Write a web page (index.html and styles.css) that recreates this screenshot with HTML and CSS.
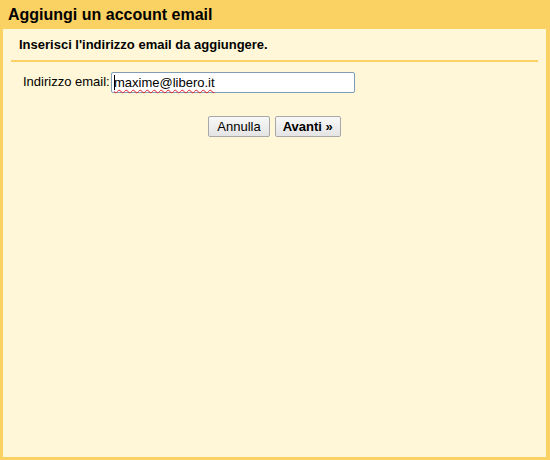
FILE: index.html
```html
<!DOCTYPE html>
<html>
<head>
<meta charset="utf-8">
<link rel="stylesheet" href="styles.css">
</head>
<body>
<div class="dialog">
  <div class="title">Aggiungi un account email</div>
  <div class="content">
    <div class="subtitle">Inserisci l'indirizzo email da aggiungere.</div>
    <div class="row">
      <span class="label">Indirizzo email:</span>
      <div class="input" role="textbox"><span class="caret"></span><span class="misspelled">maxime@libero.it</span></div>
    </div>
    <div class="buttons">
      <button class="btn">Annulla</button>
      <button class="btn btn-bold">Avanti »</button>
    </div>
  </div>
</div>
</body>
</html>
```
FILE: styles.css
```css
html, body {
  margin: 0;
  padding: 0;
  background: #fad163;
}
.dialog {
  width: 550px;
  height: 460px;
  box-sizing: border-box;
  display: flex;
  flex-direction: column;
  background: #fad163;
  padding: 0 4px 3px 3px;
  font-family: "Liberation Sans", Arial, sans-serif;
  color: #000;
}
.title {
  height: 29px;
  box-sizing: border-box;
  padding: 6px 0 0 5px;
  font-size: 16px;
  font-weight: bold;
  line-height: 18px;
}
.content {
  flex: 1;
  background: #fff7d7;
  padding: 0 8px;
}
.subtitle {
  font-size: 13px;
  font-weight: bold;
  line-height: 16px;
  padding: 8px 0 7px 8px;
  border-bottom: 2px solid #fad163;
}
.row {
  display: flex;
  align-items: center;
  margin-top: 10px;
  padding-left: 12px;
}
.label {
  font-size: 13px;
  width: 88px;
  padding-bottom: 3px;
}
.input {
  display: flex;
  align-items: center;
  width: 244px;
  height: 21px;
  box-sizing: border-box;
  border: 1px solid #7f9db9;
  border-radius: 2px;
  padding: 0 2px;
  font-size: 13px;
  color: #000;
  background: #fff;
}
.caret {
  width: 1px;
  height: 15px;
  background: #000;
  margin-right: -1px;
}
.misspelled {
  text-decoration: underline wavy #e02020;
  text-decoration-thickness: 1px;
  text-underline-offset: 2px;
  text-decoration-skip-ink: none;
}
.buttons {
  display: flex;
  justify-content: center;
  gap: 5px;
  margin-top: 23px;
}
.btn {
  height: 21px;
  box-sizing: border-box;
  padding: 0 8px;
  border: 1px solid #a8a8a8;
  border-radius: 2px;
  background: linear-gradient(#f8f8f8, #e4e4e4);
  font-family: "Liberation Sans", Arial, sans-serif;
  font-size: 13px;
  color: #000;
}
.btn-bold {
  font-weight: bold;
  padding: 0 7px;
}
```
